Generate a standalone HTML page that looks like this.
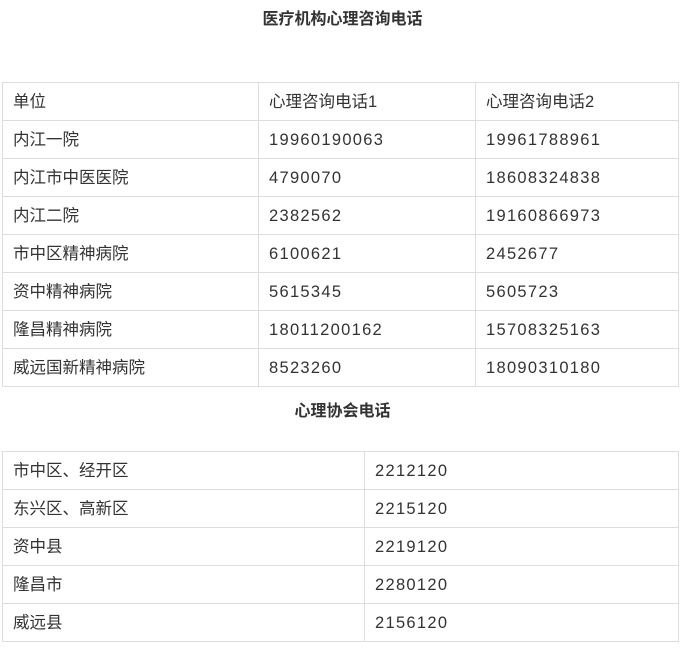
<!DOCTYPE html>
<html><head><meta charset="utf-8"><style>
body{margin:0;width:685px;height:650px;background:#fff;font-family:"Liberation Sans","Noto Sans CJK SC",sans-serif;color:#333;position:relative;overflow:hidden}
.t{position:absolute;left:0;width:685px;text-align:center;font-weight:bold;font-size:16px;line-height:20px}
table{position:absolute;left:2px;border-collapse:collapse;font-size:16.5px;table-layout:fixed}
td{border:1px solid #ddd;height:35px;line-height:35px;padding:2px 0 0 10px;box-sizing:content-box;white-space:nowrap;vertical-align:top;overflow:hidden}
td.n{letter-spacing:1.3px}
</style></head><body>
<div class="t" style="top:10px">医疗机构心理咨询电话</div>
<table style="top:82px;width:677px">
<colgroup><col style="width:256px"><col style="width:217px"><col style="width:203px"></colgroup>
<tr><td>单位</td><td>心理咨询电话1</td><td>心理咨询电话2</td></tr>
<tr><td>内江一院</td><td class="n">19960190063</td><td class="n">19961788961</td></tr>
<tr><td>内江市中医医院</td><td class="n">4790070</td><td class="n">18608324838</td></tr>
<tr><td>内江二院</td><td class="n">2382562</td><td class="n">19160866973</td></tr>
<tr><td>市中区精神病院</td><td class="n">6100621</td><td class="n">2452677</td></tr>
<tr><td>资中精神病院</td><td class="n">5615345</td><td class="n">5605723</td></tr>
<tr><td>隆昌精神病院</td><td class="n">18011200162</td><td class="n">15708325163</td></tr>
<tr><td>威远国新精神病院</td><td class="n">8523260</td><td class="n">18090310180</td></tr>
</table>
<div class="t" style="top:402px">心理协会电话</div>
<table style="top:451px;width:676px">
<colgroup><col style="width:362px"><col style="width:314px"></colgroup>
<tr><td>市中区、经开区</td><td class="n">2212120</td></tr>
<tr><td>东兴区、高新区</td><td class="n">2215120</td></tr>
<tr><td>资中县</td><td class="n">2219120</td></tr>
<tr><td>隆昌市</td><td class="n">2280120</td></tr>
<tr><td>威远县</td><td class="n">2156120</td></tr>
</table>
</body></html>
